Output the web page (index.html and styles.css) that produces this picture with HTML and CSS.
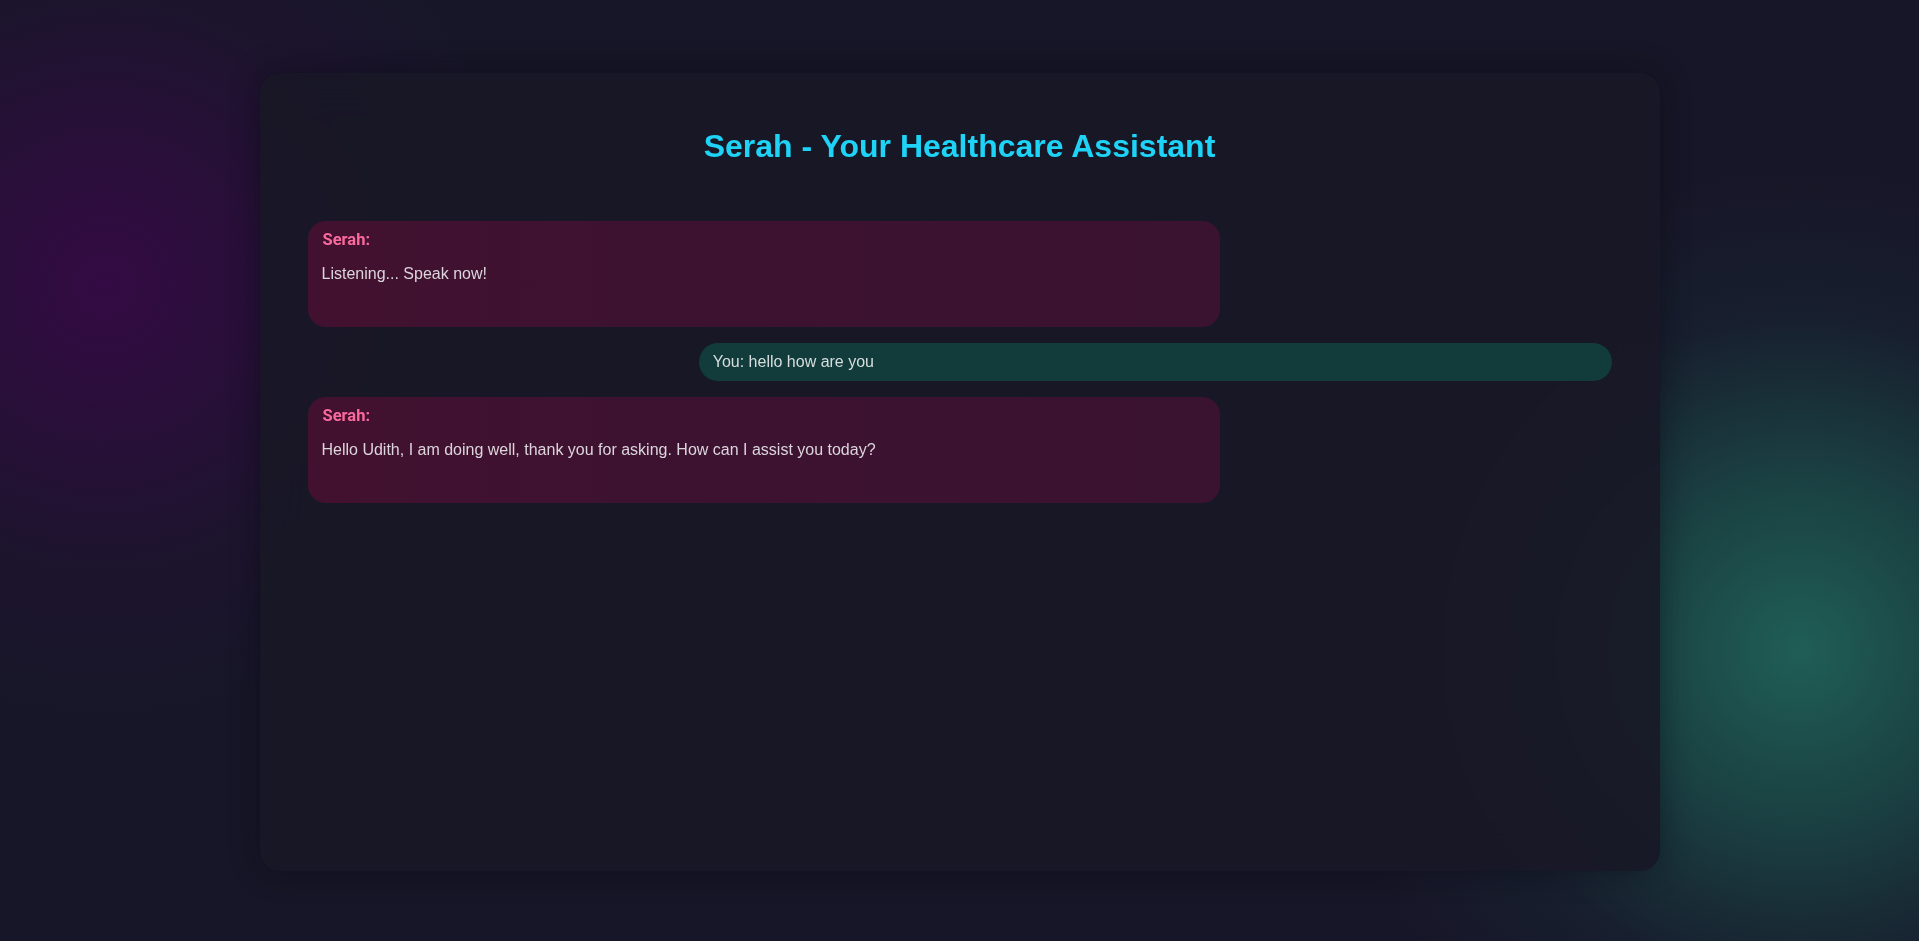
FILE: index.html
```html
<!DOCTYPE html>
<html lang="en">
<head>
<meta charset="utf-8">
<title>Serah - Your Healthcare Assistant</title>
<link rel="stylesheet" href="styles.css">
</head>
<body>
  <main class="app">
    <h1 class="title">Serah - Your Healthcare Assistant</h1>
    <section class="chat">
      <div class="msg msg-bot">
        <strong class="sender">Serah:</strong>
        <p class="text">Listening... Speak now!</p>
      </div>
      <div class="msg msg-user">You: hello how are you</div>
      <div class="msg msg-bot">
        <strong class="sender">Serah:</strong>
        <p class="text">Hello Udith, I am doing well, thank you for asking. How can I assist you today?</p>
      </div>
    </section>
  </main>
</body>
</html>
```

FILE: styles.css
```css
* {
  box-sizing: border-box;
}

html, body {
  height: 100%;
}

body {
  margin: 0;
  display: flex;
  align-items: center;
  justify-content: center;
  font-family: "Liberation Sans", Arial, sans-serif;
  background-color: #171628;
  background-image:
    radial-gradient(circle 430px at 105px 285px, rgba(52, 11, 68, 1) 0%, rgba(48, 12, 64, 0.75) 30%, rgba(40, 16, 58, 0.35) 65%, rgba(23, 22, 40, 0) 100%),
    radial-gradient(circle 480px at 1800px 650px, rgba(31, 94, 86, 1) 0%, rgba(28, 82, 77, 0.72) 35%, rgba(24, 50, 60, 0.3) 70%, rgba(23, 22, 40, 0) 100%);
  overflow: hidden;
}

.app {
  width: 1400px;
  height: 798px;
  margin-top: 3px;
  padding: 32px;
  display: flex;
  flex-direction: column;
  background: rgba(24, 23, 38, 0.9);
  backdrop-filter: blur(24px);
  border-radius: 20px;
  box-shadow: 0 0 30px rgba(8, 8, 18, 0.45);
}

.title {
  margin: 23px 0 40px;
  text-align: center;
  font-size: 32px;
  font-weight: 700;
  color: #1ed3f6;
}

.chat {
  flex: 1;
  display: flex;
  flex-direction: column;
  gap: 16px;
  padding: 16px;
  overflow: hidden;
}

.msg {
  width: 70%;
  font-size: 16px;
  color: #dcd6dc;
}

.msg-bot {
  align-self: flex-start;
  padding: 9px 15px 28px;
  border-radius: 18px;
  background: linear-gradient(90deg, #431130 0%, #3d1230 35%, #3a1330 100%);
}

.sender {
  display: block;
  font-family: Roboto, "Liberation Sans", sans-serif;
  font-weight: 700;
  font-size: 16.5px;
  line-height: 19px;
  color: #fb6a9d;
}

.text {
  margin: 16px 0 16px -1px;
}

.msg-user {
  align-self: flex-end;
  padding: 10px 14px;
  border-radius: 20px;
  background: #123c3c;
  color: #d6dedd;
}
```
